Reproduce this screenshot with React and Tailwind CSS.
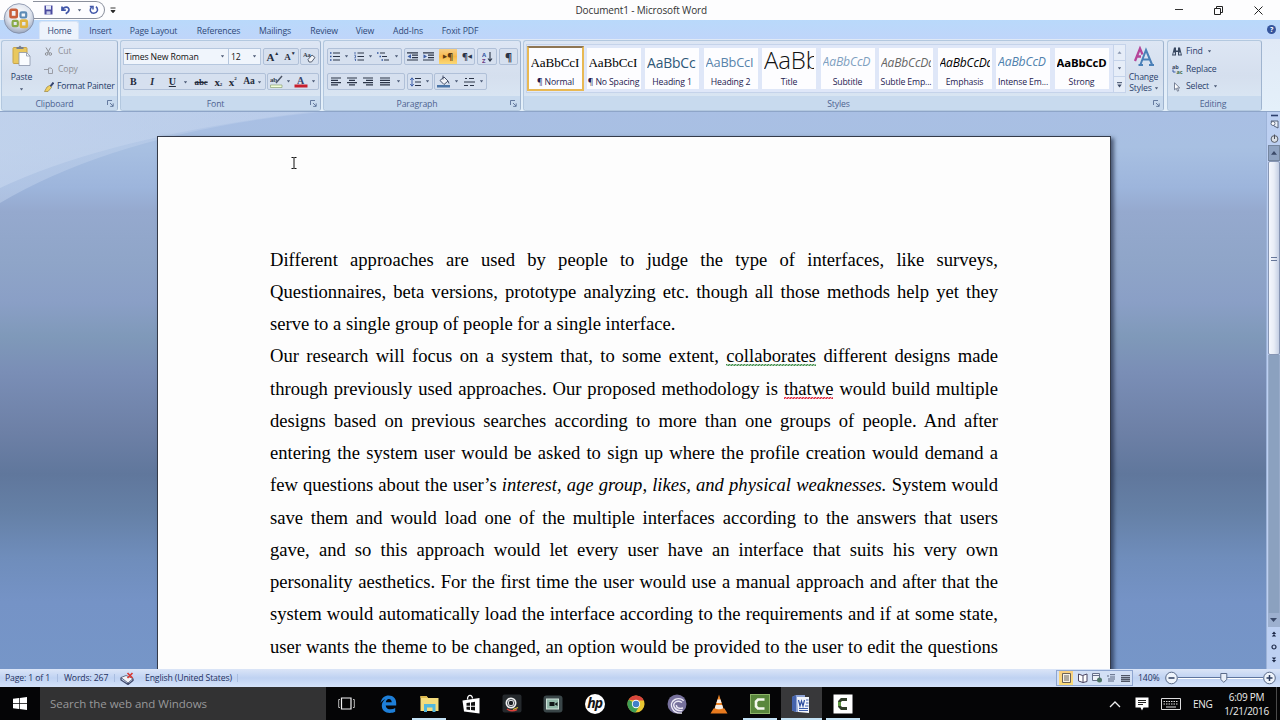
import React from "react";

const Svg = ({ w, h, vb, className = "", children }) => (
  <svg width={w} height={h} viewBox={vb || `0 0 ${w} ${h}`} className={`shrink-0 ${className}`} fill="none">
    {children}
  </svg>
);

const Caret = ({ className = "" }) => (
  <Svg w={5} h={3} className={className}>
    <path d="M0.8 0.3h3.400L2.5 2.400z" fill="#4c5a76" />
  </Svg>
);

const Launcher = () => (
  <Svg w={7} h={7}>
    <path d="M0.5 5V0.5H5M3 3l3 3M6.2 3.4v3h-3" stroke="#5a7196" strokeWidth="0.9" />
  </Svg>
);

function Group({ width, label, launcher, children, className = "" }) {
  return (
    <section className={`flex h-[71px] shrink-0 flex-col overflow-hidden rounded-[3px] border border-[#b3c8df] border-r-[#9fb4cf] bg-gradient-to-b from-[#dde6f4] via-[#d5dfee] to-[#dbe9f5] ${width} ${className}`}>
      <div className="h-[55px]">{children}</div>
      <div className="flex h-[14px] items-center bg-[#c8daee] pr-[3px] text-[#4d6290]">
        <span className="flex-1 pt-[2px] text-center">{label}</span>
        {launcher && <Launcher />}
      </div>
    </section>
  );
}

const Box = ({ width, className = "", children }) => (
  <div className={`flex h-[17px] items-center justify-around rounded-[2px] border border-[#b0c0d8] bg-[#d6e0ef] ${width} ${className}`}>{children}</div>
);

const TABS = [
  ["Insert", "w-[51px]"],
  ["Page Layout", "w-[55px]"],
  ["References", "w-[75px]"],
  ["Mailings", "w-[38px]"],
  ["Review", "w-[60px]"],
  ["View", "w-[22px]"],
  ["Add-Ins", "w-[64px]"],
  ["Foxit PDF", "w-[40px]"],
];

function TitleBar() {
  return (
    <header className="relative flex h-5 items-center bg-[#fdfdfe]">
      <div className="ml-[33px] flex h-[18px] w-[72px] items-center rounded-r-full border border-l-0 border-[#8a8f9c] bg-[#fdfdff] pl-[11px]">
        <Svg w={9} h={10}>
          <path d="M0.5 0.5h8v9h-8z" fill="#4a4aa0" />
          <path d="M2 0.5h5v4H2z" fill="#e6eaf8" />
          <path d="M2.5 6.3h4v3.2h-4z" fill="#c6cbe8" />
        </Svg>
        <Svg w={10} h={10} className="ml-2">
          <path d="M1 1.5v3.7h3.8M1.5 4.8C3 1.5 8 1.2 8 4.8c0 2-1.6 3-3.3 4" stroke="#4056a8" strokeWidth="1.7" />
        </Svg>
        <Caret className="ml-1.5" />
        <Svg w={10} h={10} className="ml-[7px]">
          <path d="M7 1.6c3 3 1 6.7-2.2 6.7C1.6 8.300 0 4.800 2.600 2.300M0.800 1.500H4v3" stroke="#4056a8" strokeWidth="1.5" />
        </Svg>
      </div>
      <Svg w={6} h={7} className="ml-[5px]">
        <path d="M0.500 1h5M1 3.500h4L3 5.800z" stroke="#222" strokeWidth="0.9" fill="#222" />
      </Svg>
      <h1 className="ml-[459.500px] text-[10px] tracking-[-0.140px] text-[#333] whitespace-nowrap">Document1 - Microsoft Word</h1>
      <div className="ml-auto flex items-center pr-[17px]">
        <Svg w={8} h={8}><path d="M0 3.500h8" stroke="#333" /></Svg>
        <Svg w={9} h={9} className="ml-[31px]">
          <path d="M0.500 2.500h6v6h-6zM2.500 2.500v-2h6v6h-2" stroke="#222" />
        </Svg>
        <Svg w={9} h={9} className="ml-[31px]"><path d="M0.500 0.500l8 8M8.500 0.500l-8 8" stroke="#222" /></Svg>
      </div>
      <div className="absolute left-[3px] top-[3px] z-10">
        <Svg w={32} h={32}>
          <defs>
            <radialGradient id="orb" cx="0.5" cy="0.35" r="0.65">
              <stop offset="0" stopColor="#ffffff" />
              <stop offset="0.6" stopColor="#dfe4ee" />
              <stop offset="1" stopColor="#9aa6bd" />
            </radialGradient>
          </defs>
          <circle cx="16" cy="15.500" r="14.800" fill="url(#orb)" stroke="#7f8aa3" strokeWidth="0.8" />
          <rect x="7.500" y="6.800" width="6.300" height="7.300" rx="1.200" stroke="#c9603c" strokeWidth="2.600" />
          <rect x="17.500" y="9.300" width="5.700" height="5.200" rx="1.200" stroke="#5d8bb5" strokeWidth="2.200" />
          <rect x="9.600" y="17.800" width="5.200" height="5.400" rx="1.200" stroke="#8aab4a" strokeWidth="2.200" />
          <rect x="17.800" y="17.600" width="6" height="6.300" rx="1.200" stroke="#e0b440" strokeWidth="2.600" />
        </Svg>
      </div>
    </header>
  );
}

function TabRow() {
  return (
    <nav className="flex h-[19px] items-end bg-gradient-to-b from-[#b9d9fb] to-[#bfd5fa] text-[#2f4878]">
      <div className="ml-[39px] flex h-[18px] w-[40px] items-center justify-center rounded-t-[3px] border border-b-0 border-[#d8e4f5] bg-[#edf3fc] pl-px pt-px">Home</div>
      <div className="flex h-[18px] items-center pt-[2px]">
        {TABS.map(([t, w], i) => (
          <span key={t} className={`flex justify-center whitespace-nowrap ${w} ${i === 0 ? "ml-[-4px]" : ""}`}>{t}</span>
        ))}
      </div>
      <div className="mb-[5px] ml-auto mr-[4px] flex size-[9px] items-center justify-center rounded-full bg-[#35549c] text-[7px] font-bold text-white">?</div>
    </nav>
  );
}

function Clipboard() {
  return (
    <Group width="w-[117px]" className="ml-[1px]" label="Clipboard" launcher>
      <div className="flex h-full">
        <div className="flex w-[39px] flex-col items-center pt-[4px] text-[#263c68]">
          <Svg w={19} h={21}>
            <rect x="1" y="2.500" width="14" height="16" rx="1" fill="#e9c85f" stroke="#c9a54a" />
            <path d="M4.500 4V2h2L8 0.500 9.500 2h2v2z" fill="#777f8e" />
            <path d="M7 7.500h7.500l3.500 3.500v9.500H7z" fill="#fafcff" stroke="#8a94a8" strokeWidth="0.8" />
            <path d="M14.500 7.500v3.500H18" stroke="#8a94a8" strokeWidth="0.8" />
          </Svg>
          <span className="mt-[7px]">Paste</span>
          <Caret className="mt-[6px]" />
        </div>
        <div className="flex flex-col pl-[3px] pt-[2px] text-[#8e9096]">
          <div className="flex h-[17.500px] items-center gap-[5px]">
            <Svg w={9} h={9}><path d="M2 0.500l3.500 6M6.500 0.500L3.500 6" stroke="#8e9096" /><circle cx="2.600" cy="7" r="1.300" stroke="#8e9096" /><circle cx="6.300" cy="7" r="1.300" stroke="#8e9096" /></Svg>
            Cut
          </div>
          <div className="flex h-[17.500px] items-center gap-[5px]">
            <Svg w={9} h={9}><path d="M0 4.500h4M4.500 3h2.500l1.500 1.500v4h-4z" stroke="#9a9da6" /></Svg>
            Copy
          </div>
          <div className="flex h-[17.500px] items-center gap-[3px] whitespace-nowrap tracking-[-0.220px] text-[#243a66]">
            <Svg w={10} h={10}><path d="M9.500 0.500L6 5" stroke="#35446e" strokeWidth="2" /><path d="M5.500 3.500l2 2L4 9.500H0.500L3 5z" fill="#f0d060" stroke="#9b8540" strokeWidth="0.700" /></Svg>
            Format Painter
          </div>
        </div>
      </div>
    </Group>
  );
}

const serif = "font-['Liberation_Serif',serif] font-bold text-[#252c3c]";

function FontGroup() {
  return (
    <Group width="w-[201px]" className="ml-[2px]" label="Font" launcher>
      <div className="flex items-center pl-[2px] pt-[7px]">
        <div className="flex h-[17px] w-[106px] items-center justify-between border border-[#b6c7de] bg-[#f0f5fc] pl-px pr-[3px] tracking-[-0.120px] text-[#111]"><span className="pt-px">Times New Roman</span><Caret /></div>
        <div className="flex h-[17px] w-[32px] items-center justify-between border border-l-0 border-[#b6c7de] bg-[#f0f5fc] pl-[2px] pr-[3px] text-[#111]"><span className="pt-px">12</span><Caret /></div>
        <Box width="w-[36px]" className={`ml-[2px] ${serif}`}>
          <span className="flex text-[11px] leading-3">A<span className="text-[5px] leading-[5px]">▲</span></span>
          <span className="flex text-[9px] leading-3">A<span className="text-[5px] leading-[5px]">▼</span></span>
        </Box>
        <Box width="w-[19px]" className="ml-[1px]">
          <Svg w={13} h={12}><path d="M5 8.500l4-4.500 3 2.500-3.500 4.500H6z" fill="#f2f4f8" stroke="#4b5365" strokeWidth="0.900" /><text x="0" y="5.500" fontSize="6.500" fontWeight="700" fill="#353c4c" fontFamily="Liberation Serif, serif">Aa</text></Svg>
        </Box>
      </div>
      <div className="flex items-center pl-[2px] pt-[8px]">
        <Box width="w-[143px]" className={`pt-px text-[10px] ${serif}`}>
          <span className="w-[12px] text-center">B</span>
          <span className="w-[12px] text-center italic">I</span>
          <span className="flex items-center gap-[7px] pl-1"><span className="underline">U</span><Caret /></span>
          <span className="text-[9px] line-through">abc</span>
          <span className="flex items-end text-[11px] leading-3">x<span className="text-[5px] leading-[6px]">2</span></span>
          <span className="flex items-start text-[11px] leading-3">x<span className="text-[5px] leading-[6px]">2</span></span>
          <span className="flex items-center gap-[2px] text-[9.500px]">Aa<Caret /></span>
        </Box>
        <Box width="w-[52px]" className="ml-[1px]">
          <Svg w={13} h={13}><text x="0" y="7" fontSize="7" fontWeight="700" fill="#353c4c" fontFamily="Liberation Serif, serif">ab</text><path d="M12 1L6 8" stroke="#4a5263" strokeWidth="1.400" /><path d="M0.500 10h11.500v2.500H0.500z" fill="#f2ffd8" stroke="#8da276" strokeWidth="0.700" /></Svg>
          <Caret />
          <Svg w={14} h={13}><text x="3" y="8.500" fontSize="10" fontWeight="700" fill="#36466e" fontFamily="Liberation Serif, serif">A</text><path d="M0.500 9.500h13v3H0.500z" fill="#c9202e" /></Svg>
          <Caret />
        </Box>
      </div>
    </Group>
  );
}

const K = "#2b3447";
const lines = (arr) => arr.map(([x1, x2, y], i) => <path key={i} d={`M${x1} ${y}H${x2}`} stroke={K} strokeWidth="1.2" />);

function ParagraphGroup() {
  const align = [
    [[0, 10, 1], [0, 7, 3.3], [0, 10, 5.6], [0, 7, 7.9]],
    [[0, 10, 1], [2, 8, 3.3], [0, 10, 5.6], [2, 8, 7.9]],
    [[0, 10, 1], [3, 10, 3.3], [0, 10, 5.6], [3, 10, 7.9]],
    [[0, 10, 1], [0, 10, 3.3], [0, 10, 5.6], [0, 10, 7.9]],
  ];
  return (
    <Group width="w-[198px]" className="ml-[2px]" label="Paragraph" launcher>
      <div className="flex items-center pl-[3px] pt-[7px]">
        <Box width="w-[75px]">
          <Svg w={10} h={9}>{lines([[3, 10, 1], [3, 10, 4.5], [3, 10, 8]])}<path d="M0 1h1.500M0 4.500h1.500M0 8h1.500" stroke="#3355a0" strokeWidth="1.500" /></Svg><Caret />
          <Svg w={10} h={9}>{lines([[3.5, 10, 1], [3.5, 10, 4.5], [3.5, 10, 8]])}<path d="M1 0v2.500M0.500 3.500h1v2h-1M0.500 7h1v2" stroke="#3355a0" strokeWidth="0.800" /></Svg><Caret />
          <Svg w={12} h={9}>{lines([[3, 8, 1], [5, 10, 4.5], [7, 12, 8]])}<path d="M0 1h1.500M2.500 4.500H4M4.500 8H6" stroke="#3355a0" strokeWidth="1.500" /></Svg><Caret />
        </Box>
        <Box width="w-[71px]" className="ml-[2px]">
          <Svg w={11} h={9}>{lines([[0, 11, 0.8], [5, 11, 3.2], [5, 11, 5.600], [0, 11, 8]])}<path d="M4 2.200v4.400L0.500 4.400z" fill="#3e5fa8" /></Svg>
          <Svg w={11} h={9}>{lines([[0, 11, 0.8], [5, 11, 3.2], [5, 11, 5.600], [0, 11, 8]])}<path d="M0.500 2.200v4.400L4 4.400z" fill="#3e5fa8" /></Svg>
          <div className="flex h-[15px] w-[18px] items-center justify-center bg-gradient-to-b from-[#f6cf86] via-[#f7b94a] to-[#fbd975] text-[9px] font-bold text-[#5b3a14]"><span className="text-[5px]">▶</span>¶</div>
          <div className="flex items-center text-[9px] font-bold text-[#2b3447]">¶<span className="text-[5px]">◀</span></div>
        </Box>
        <Box width="w-[20px]" className="ml-[2px]">
          <Svg w={11} h={12}><text x="0" y="5.500" fontSize="6" fontWeight="700" fill="#3355a0" fontFamily="Open Sans, sans-serif">A</text><text x="0" y="11.500" fontSize="6" fontWeight="700" fill="#6a3a80" fontFamily="Open Sans, sans-serif">Z</text><path d="M8 1v8.500M6 7.500L8 10l2-2.500" stroke={K} strokeWidth="1.100" /></Svg>
        </Box>
        <Box width="w-[19px]" className="ml-[2px] text-[11px] font-bold text-[#2b3447]">¶</Box>
      </div>
      <div className="flex items-center pl-[3px] pt-[8px]">
        <Box width="w-[78px]">
          {align.map((a, i) => <Svg key={i} w={10} h={9}>{lines(a)}</Svg>)}
          <Caret />
        </Box>
        <Box width="w-[26px]" className="ml-[2px]">
          <Svg w={11} h={10}>{lines([[5, 11, 1.500], [5, 11, 5], [5, 11, 8.500]])}<path d="M2 1v8M0.300 3L2 0.800 3.700 3M0.300 7L2 9.200 3.700 7" stroke="#3e5fa8" /></Svg><Caret />
        </Box>
        <Box width="w-[53px]" className="ml-[1px]">
          <Svg w={13} h={13}><path d="M3 5.500L7 2l4 4-4 3.500z" fill="#f0f3f9" stroke="#46516a" /><path d="M6 0.500v4M11 6l1 2.500" stroke="#46516a" /><path d="M0 10h13v2.500H0z" fill="#4c76a8" /></Svg><Caret />
          <Svg w={11} h={10}>{lines([[5, 10, 1.500], [0, 11, 5], [0, 4, 8.500], [6, 10, 8.500]])}<path d="M1 1.500h2" stroke={K} /></Svg><Caret />
        </Box>
      </div>
    </Group>
  );
}

const STYLES = [
  ["AaBbCcI", "¶ Normal", "font-['Liberation_Serif',serif] text-[13.200px] text-black"],
  ["AaBbCcI", "¶ No Spacing", "font-['Liberation_Serif',serif] text-[13.200px] text-black"],
  ["AaBbCc", "Heading 1", "text-[13.900px] text-[#2f5878]"],
  ["AaBbCcI", "Heading 2", "text-[12.800px] text-[#5783ab]"],
  ["AaBb", "Title", "text-[24px] font-light text-[#111] pb-[5px]"],
  ["AaBbCcD", "Subtitle", "text-[12.200px] italic text-[#7fa0bf]"],
  ["AaBbCcDd", "Subtle Emp...", "text-[12px] italic text-[#666]"],
  ["AaBbCcDd", "Emphasis", "text-[12px] italic text-black"],
  ["AaBbCcD", "Intense Em...", "text-[12.200px] italic text-[#4f81ad]"],
  ["AaBbCcD", "Strong", "text-[11.400px] font-bold text-black"],
];

function StylesGroup() {
  return (
    <Group width="w-[641px]" className="ml-[2px]" label="Styles" launcher>
      <div className="flex pl-[2px] pt-[3px]">
        <div className="flex h-[49px] w-[588px] items-center gap-[4.500px] border border-[#c5d3ea] bg-[#dfe7f8] pl-px">
          {STYLES.map(([a, b, c], i) => (
            <div key={b} className={`flex shrink-0 flex-col items-center overflow-hidden bg-[#fdfdff] ${i === 0 ? "-ml-px -mr-[2px] h-[45px] w-[57px] border-2 border-[#e8b954] border-t-[#8f7654]" : "h-[41px] w-[54px]"}`}>
              <div className={`flex h-[29px] w-[50px] shrink-0 items-center overflow-hidden whitespace-nowrap tracking-[-0.150px] ${c}`}>{a}</div>
              <div className="mt-px whitespace-nowrap text-[#241a50]">{b}</div>
            </div>
          ))}
        </div>
        <div className="flex h-[49px] w-[12px] flex-col border border-l-0 border-[#c5d3ea] bg-[#e6edf8]">
          <div className="flex flex-1 items-center justify-center border-b border-[#c5d3ea]"><Svg w={5} h={3}><path d="M0.500 2.700h4L2.500 0.300z" fill="#8693ad" /></Svg></div>
          <div className="flex flex-1 items-center justify-center border-b border-[#c5d3ea]"><Caret /></div>
          <div className="flex flex-1 items-center justify-center"><Svg w={5} h={6}><path d="M0 0.700h5" stroke="#3c4a66" /><path d="M0.300 2.500h4.400L2.500 5.500z" fill="#3c4a66" /></Svg></div>
        </div>
        <div className="flex w-[34px] flex-col items-center pl-[1px] pt-px text-[#2c416c]">
          <Svg w={21} h={23}>
            <path d="M2 16L7 3.500l2.500 6M4 11.500h4" stroke="#b5469a" strokeWidth="2.300" />
            <path d="M7.500 19.500L13 5l6 14.500M9.500 14.500h7M5.500 20h4.500M16 20h5" stroke="#4a80b8" strokeWidth="2" />
          </Svg>
          <span className="mt-[3px] leading-3">Change</span>
          <span className="flex items-center gap-[2px] pl-px leading-[11px]">Styles<Caret /></span>
        </div>
      </div>
    </Group>
  );
}

function EditingGroup() {
  return (
    <Group width="w-[95px]" className="ml-[3px]" label="Editing">
      <div className="flex flex-col pl-[4px] pt-[2px] text-[#2c416c]">
        <div className="flex h-[17.500px] items-center gap-[4px]">
          <Svg w={10} h={9}><path d="M2 0.500h2v3h2v-3h2L10 8.500H6V5H4v3.500H0z" fill="#38475f" /><path d="M1.500 5.500h1.500v2H1.200zM7 5.500h1.500l.3 2H7z" fill="#c9d4e6" /></Svg>
          <span>Find</span><Caret />
        </div>
        <div className="flex h-[17.500px] items-center gap-[4px]">
          <Svg w={11} h={10}><text x="0" y="4.500" fontSize="5.500" fontWeight="700" fill="#38475f" fontFamily="Open Sans, sans-serif">ab</text><text x="4.500" y="9.500" fontSize="5.500" fontWeight="700" fill="#3d6a48" fontFamily="Open Sans, sans-serif">ac</text><path d="M1 5.500v2.500h2.500" stroke="#3e5fa8" /></Svg>
          <span className="-ml-px">Replace</span>
        </div>
        <div className="flex h-[17.500px] items-center gap-[4px]">
          <Svg w={10} h={10}><path d="M2.500 0.800v7l1.800-1.500 1.200 2.900 1.200-.5-1.200-2.800h2.200z" fill="#fff" stroke="#59647c" strokeWidth="0.800" /></Svg>
          <span>Select</span><Caret />
        </div>
      </div>
    </Group>
  );
}

const W = ({ children, tone }) => (
  <span className={`bg-[length:3px_2px] bg-bottom bg-repeat-x ${tone}`}>{children}</span>
);
const GRAMMAR = "bg-[repeating-conic-gradient(#3f8f4a_0_25%,transparent_0_50%)]";
const SPELLING = "bg-[repeating-conic-gradient(#e0243c_0_25%,transparent_0_50%)]";

const BODY = [
  "Different approaches are used by people to judge the type of interfaces, like surveys,",
  "Questionnaires, beta versions, prototype analyzing etc. though all those methods help yet they",
  "serve to a single group of people for a single interface.",
  <>Our research will focus on a system that, to some extent, <W tone={GRAMMAR}>collaborates</W> different designs made</>,
  <>through previously used approaches. Our proposed methodology is <W tone={SPELLING}>thatwe</W> would build multiple</>,
  "designs based on previous searches according to more than one groups of people. And after",
  "entering the system user would be asked to sign up where the profile creation would demand a",
  <>few questions about the user’s <i>interest, age group, likes, and physical weaknesses.</i> System would</>,
  "save them and would load one of the multiple interfaces according to the answers that users",
  "gave, and so this approach would let every user have an interface that suits his very own",
  "personality aesthetics. For the first time the user would use a manual approach and after that the",
  "system would automatically load the interface according to the requirements and if at some state,",
  "user wants the theme to be changed, an option would be provided to the user to edit the questions",
];

function Workspace() {
  return (
    <main className="relative flex h-[557px] overflow-hidden bg-[linear-gradient(180deg,#a9bfe4_0px,#a8c0e2_35px,#9db5dc_75px,#95a9ce_100px,#8fa5c8_150px,#8a9fc6_190px,#7f99b9_225px,#7a8eb6_260px,#6d80a6_320px,#60779c_362px,#6580a6_400px,#6f8dbb_445px,#7593c6_490px,#7696c8_557px)]">
      <svg width="320" height="100" viewBox="0 0 320 100" className="absolute left-0 top-0">
        <defs>
          <linearGradient id="glow" x1="0" y1="0" x2="1" y2="0">
            <stop offset="0" stopColor="#c6d6ee" stopOpacity="0.9" />
            <stop offset="1" stopColor="#c0d1ec" stopOpacity="0.8" />
          </linearGradient>
        </defs>
        <path d="M0 0H320Q120 20 0 91Z" fill="url(#glow)" opacity="0.5" />
        <path d="M0 0H310Q110 24 0 76Z" fill="url(#glow)" opacity="0.7" />
      </svg>
      <article className="relative ml-[157px] mt-[24px] h-[560px] w-[954px] shrink-0 border border-[#343a48] bg-[#fdfdfd] pl-[112px] pt-[106.500px] shadow-[3px_2px_4px_rgba(25,35,60,0.65)]">
        <div className="w-[728px] font-['Liberation_Serif',serif] text-[18.600px] leading-[32.250px] tracking-normal text-black">
          {BODY.map((l, i) => (
            <p key={i} className={`h-[32.250px] ${i === 2 ? "whitespace-nowrap" : "[text-align-last:justify]"}`}>{l}</p>
          ))}
        </div>
        <svg width="6" height="12" viewBox="0 0 6 12" className="absolute left-[133px] top-[20px]" fill="none">
          <path d="M0.500 0.500H2.500L3 1l.5-.5h2M3 1v10M0.500 11.500H2.500L3 11l.5.5h2" stroke="#111" />
        </svg>
      </article>
      <aside className="ml-auto flex w-[14px] flex-col items-center border-l border-[#9db3d8] bg-[#bdd0f2]">
        <Svg w={12} h={33}>
          <path d="M3 3.500h7" stroke="#2c3f6c" strokeWidth="1.600" />
          <path d="M3 9l3 5 4 2V9z" fill="#e8eef8" stroke="#4a5770" strokeWidth="0.900" /><circle cx="5" cy="11.500" r="2" fill="#fff" stroke="#4a5770" strokeWidth="0.800" />
          <circle cx="6.500" cy="27" r="3.400" fill="#dadfe6" stroke="#4a4f5b" strokeWidth="0.900" /><path d="M6.500 22.500v4.500" stroke="#4a4f5b" />
        </Svg>
        <div className="flex h-[16px] w-[12px] items-center justify-center border border-[#75869f] bg-[#8fa3c2]"><Svg w={6} h={4}><path d="M0 3.700h6L3 0z" fill="#3b4a69" /></Svg></div>
        <div className="flex h-[194px] w-[12px] flex-col items-center justify-center gap-px rounded-[2px] border border-[#8796b4] bg-gradient-to-r from-[#f4f7fd] via-[#e8edf6] to-[#c4cfe4] pt-px">
          <div className="mb-px h-px w-[6px] bg-[#66779a]" /><div className="h-px w-[6px] bg-[#66779a]" />
        </div>
        <div className="w-[12px] flex-1 border-x border-[#98abc9] bg-[#8ba1bf]" />
        <div className="flex h-[14px] w-[12px] items-center justify-center bg-[#9db0cf]"><Svg w={7} h={4}><path d="M0 0h7L3.500 4z" fill="#3b4a69" /></Svg></div>
        <div className="flex h-[42px] flex-col items-center justify-around pb-[2px]">
          <Svg w={6} h={6}><path d="M0.800 3L3 0.500 5.200 3zM0.800 5.500L3 3l2.200 2.500z" fill="#1f2b4a" /></Svg>
          <Svg w={6} h={6}><circle cx="3" cy="3" r="2" stroke="#1f2b4a" strokeWidth="1.200" /></Svg>
          <Svg w={6} h={6}><path d="M0.800 0.500h4.400L3 3zM0.800 3h4.400L3 5.500z" fill="#1f2b4a" /></Svg>
        </div>
      </aside>
    </main>
  );
}

function StatusBar() {
  return (
    <footer className="flex h-[18px] items-center bg-gradient-to-b from-[#dbe5f7] via-[#bfd2f2] to-[#d5e3fa] text-[#1f3160] whitespace-nowrap">
      <span className="w-[58px] border-r border-[#a9bde0] pl-[5px]">Page: 1 of 1</span>
      <span className="w-[57px] border-r border-[#a9bde0] pl-[6px]">Words: 267</span>
      <Svg w={15} h={13} className="ml-[5px]">
        <path d="M1 5.500l5-2 7 3-5 4.500z" fill="#f2f4f8" stroke="#69718a" /><path d="M1 5.500v2.500L8 12.500v-1.500M13 6.500v2L8 12.500" stroke="#3f486a" strokeWidth="1.300" /><path d="M7.500 1l5 5M12.500 1l-5 5" stroke="#d93a35" strokeWidth="1.700" />
      </Svg>
      <span className="ml-[10px] w-[93px] border-r border-[#a9bde0]">English (United States)</span>
      <div className="ml-auto flex h-[16px] w-[77px] items-center justify-around border border-[#8fa6d0] bg-[#d3e0f5]">
        <span className="flex h-[14px] w-[14px] items-center justify-center bg-gradient-to-b from-[#f8cf80] to-[#fbdc78]"><Svg w={9} h={10}><path d="M0.500 0.500h8v9h-8zM2 3h5M2 5h5M2 7h5" fill="#f6f2e6" stroke="#6b6257" /></Svg></span>
        <Svg w={10} h={10}><path d="M0.500 1l4 1.500 4.500-1.500v7.500L5 9.500 0.500 8zM5 2.500v7" fill="#fff" stroke="#4b4560" /></Svg>
        <Svg w={11} h={10}><path d="M0.500 0.500h7v7h-7zM0.500 2.500h7" fill="#eef2f8" stroke="#67708a" /><circle cx="7.500" cy="7" r="2.500" fill="#4d7565" /></Svg>
        <Svg w={9} h={8}><path d="M0 2h2M3 0.700h5M3 3h5M1 5h7M1 7h6" stroke="#59657f" /></Svg>
        <Svg w={9} h={7}><path d="M0 0.700h9M0 2.600h9M0 4.500h9M0 6.400h9" stroke="#4f5665" strokeWidth="1.300" /></Svg>
      </div>
      <span className="ml-[5px] w-[22px]">140%</span>
      <Svg w={13} h={14} className="ml-[5px]"><circle cx="6.500" cy="7" r="5.800" fill="#eff4fb" stroke="#5a6a88" /><path d="M3.500 7h6" stroke="#2d3c5e" strokeWidth="1.500" /></Svg>
      <div className="relative h-[10px] w-[85px]">
        <div className="mt-[4px] h-[2px] border-t border-[#5f759e] bg-white" />
        <Svg w={8} h={10} className="absolute left-[42px] top-0"><path d="M0.800 0.500h6v6L3.800 9.300 0.800 6.500z" fill="#e8eef8" stroke="#5a6a88" /></Svg>
      </div>
      <Svg w={13} h={14} className="mr-[4px]"><circle cx="6.500" cy="7" r="5.800" fill="#eff4fb" stroke="#5a6a88" /><path d="M3.500 7h6M6.500 4v6" stroke="#2d3c5e" strokeWidth="1.500" /></Svg>
    </footer>
  );
}

const APPS = [
  ["task", <Svg w={17} h={13}><path d="M3.500 1h9.500v11H3.500z" stroke="#f2f2f2" strokeWidth="1.200" /><path d="M2 2.500H0.700v8H2M15 2.500h1.300v8H15" stroke="#bbb" /></Svg>],
  ["edge", <Svg w={17} h={18}><path d="M0.500 8C1.500 2.800 4.800 0.500 8.700 0.500c4.800 0 7.500 3.300 7.500 7.600V10.400H5.700c.2 2.700 2.400 3.900 5 3.900 1.700 0 3.100-.4 4.500-1.200v3.600C13.700 17.500 12 17.900 9.800 17.900 5 17.900 1.800 15 1.800 10.700c0-2.600 1.300-5 3.700-6.400C3.300 4.900 1.500 6.200 0.500 8zM5.800 7.300h5.900c0-2-.9-3.300-2.800-3.300-1.700 0-2.800 1.400-3.100 3.300z" fill="#1e7fd8" /></Svg>],
  ["files", <Svg w={19} h={17}><path d="M0.500 1h6l1.500 2h10.500v13H0.500z" fill="#f4dc7c" /><path d="M0.500 1h6l1.500 2H0.500z" fill="#dcb84e" /><path d="M4 9h11.500v8h-3v-4.500h-5.500V17H4z" fill="#52b7dd" /></Svg>, "w-[34px]"],
  ["store", <Svg w={18} h={20}><path d="M5.500 5.500C5.500 0.500 10 0 10.500 4.500" stroke="#fff" strokeWidth="1.300" /><path d="M0.500 6.500L17.500 4v15.500L2 17.500z" fill="#fff" /><path d="M4.500 9l3.500-.5v3.300H4.500zM9 8.400l4-.6v4H9zM4.500 12.800H8v3.200l-3.500-.4zM9 12.800h4v3.800l-4-.5z" fill="#111" /></Svg>],
  ["cam", <Svg w={20} h={19}><rect width="19" height="18" x="0.500" y="0.500" rx="2" fill="#25292c" /><circle cx="9" cy="9" r="5.500" fill="#f1f1f1" /><circle cx="9" cy="9" r="3.600" stroke="#555b60" /><circle cx="9" cy="9" r="2.200" fill="#1b1f24" /><path d="M5 15c2.500 2 6 2.500 10 .5" stroke="#e0413a" strokeWidth="1.500" /><path d="M11 15.500l5-2" stroke="#d8c23a" strokeWidth="1.300" /></Svg>],
  ["video", <Svg w={20} h={18}><rect x="0.500" y="0.500" width="19" height="17" rx="3" fill="#3a4648" /><rect x="3.500" y="4" width="12" height="10" fill="#91b7a8" stroke="#d0e2d9" /><path d="M6.500 7h5v4h-5zM12 8.700L14.500 7v4L12 9.500z" fill="#101517" /></Svg>],
  ["hp", <div className="flex size-5 items-center justify-center rounded-full bg-white pb-[2px] text-[14px] font-bold italic leading-none tracking-[-1px] text-[#151515]">hp</div>],
  ["chrome", <Svg w={18} h={18} vb="0 0 20 20"><circle cx="10" cy="10" r="9.500" fill="#e8c631" /><path d="M10 10L1.800 5.200A9.500 9.500 0 0 0 9.500 19.500l4-7z" fill="#3f9e56" /><path d="M1.800 5.200A9.500 9.500 0 0 1 18.600 6H10z" fill="#d9463c" /><circle cx="10" cy="10" r="4.600" fill="#fff" /><circle cx="10" cy="10" r="3.600" fill="#4380c8" /></Svg>],
  ["bt", <Svg w={20} h={20}><circle cx="10" cy="10" r="9.500" fill="#77719c" /><path d="M15 19C5 20 1 9 8 5.500c4-2 8 0 8.500 1.500M15.500 16.500C8 17.500 4.500 11 8.500 8c2.500-1.500 5-.5 6.500.5M16 14c-4 1-7-.5-6.500-3" stroke="#ece9f5" strokeWidth="1.400" /></Svg>],
  ["vlc", <Svg w={18} h={20}><path d="M3.500 14.500h11l3 5H0.500z" fill="#e77a1e" /><path d="M9 0.500L4.500 15c2.500 1.500 6.500 1.500 9 0z" fill="#ef8424" /><path d="M7.500 5.500h3L11.600 9H6.400zM5.800 11h6.400l1.100 3.300c-2.800 1.300-6 1.300-8.600 0z" fill="#f5ede6" /></Svg>],
  ["cam1", <Svg w={20} h={20}><rect x="0.500" y="0.500" width="19" height="19" fill="#59873c" stroke="#8cb368" /><path d="M14.500 5.500H8L6 7.500v5l2 2h6.500" stroke="#f4f8ee" strokeWidth="2.600" /></Svg>, "w-[34px]"],
  ["word", <Svg w={20} h={20}><path d="M1 3l4-2h9v17H5l-4-1.500z" fill="#8ea3d4" /><path d="M1 3l4-2v17l-4-1.500z" fill="#4563ac" /><path d="M6 3h12v16l-11-1z" fill="#f3f6fc" /><path d="M7.500 6l1.500 6L10.500 7l1.500 5L13.500 6" stroke="#2c4da0" strokeWidth="1.200" /><path d="M8 14.500h9M8 16.500h9M15 6h2.500M15 9h2.500M14 12h3.500" stroke="#3c5dac" /></Svg>, "w-[41px]"],
  ["cam2", <Svg w={20} h={20}><rect x="0.500" y="0.500" width="19" height="19" fill="#fff" /><path d="M14 5.500H8.500L6.500 7.500v5l2 2H14" stroke="#2f3d29" strokeWidth="2.800" /><path d="M6.500 12V8" stroke="#5d9a3e" strokeWidth="2.800" /></Svg>, "w-[34px]"],
];

function Taskbar() {
  return (
    <footer className="flex h-[33px] bg-[#050506] text-[#ededed]">
      <div className="flex w-[40px] items-center justify-center">
        <Svg w={14} h={13}><path d="M0 1.800l6-.8v5.200H0zM6.700 0.900L14 0v6.200H6.700zM0 6.900h6V12l-6-.8zM6.700 6.900H14V13l-7.300-.9z" fill="#fff" /></Svg>
      </div>
      <div className="flex w-[286px] items-center bg-[#323233] pl-[10px] pt-px text-[11.500px] tracking-[-0.030px] text-[#98989a]">Search the web and Windows</div>
      <div className="flex">
        {APPS.map(([k, icon, bar]) => (
          <div key={k} className={`relative flex w-[41.350px] items-center justify-center ${k === "word" ? "bg-[#38383a]" : ""}`}>
            {icon}
            {bar && <div className={`absolute bottom-0 h-[2px] bg-[#c3e2f5] ${bar}`} />}
          </div>
        ))}
      </div>
      <div className="ml-auto flex items-center">
        <Svg w={12} h={8}><path d="M1 7l5-5 5 5" stroke="#eee" strokeWidth="1.300" /></Svg>
        <Svg w={14} h={14} className="ml-[14px]"><path d="M0.500 0.500h13v10H8.500L7 13.500 5.500 10.500h-5z" fill="#fff" /><path d="M3 3.500h8M3 5.500h8M3 7.500h5" stroke="#222" /></Svg>
        <Svg w={20} h={12} className="ml-[12px]"><path d="M0.500 0.500h19v11h-19z" stroke="#ddd" /><path d="M2.500 3.500h15M2.500 6h15" stroke="#ddd" strokeWidth="1.200" strokeDasharray="1.500 1" /><path d="M5 9h10" stroke="#ddd" /></Svg>
        <span className="ml-[12px] w-[19px] pt-px text-[10px] tracking-[-0.300px]">ENG</span>
        <div className="ml-[11px] w-[47px] text-center text-[10px] leading-[14px] tracking-[-0.300px] whitespace-nowrap">6:09 PM<br />1/21/2016</div>
        <div className="ml-[6px] h-[33px] w-[4px] border-l border-[#4a4a4a]" />
      </div>
    </footer>
  );
}

export default function App() {
  return (
    <div className="flex h-[720px] w-[1280px] flex-col overflow-hidden font-['Open_Sans','Noto_Sans',sans-serif] text-[8.700px] leading-none tracking-[-0.150px]">
      <TitleBar />
      <TabRow />
      <div className="flex h-[73px] items-start border-b border-[#8ea5c8] bg-gradient-to-b from-[#e0e9f6] to-[#e4f0fa] pt-px">
        <Clipboard />
        <FontGroup />
        <ParagraphGroup />
        <StylesGroup />
        <EditingGroup />
      </div>
      <Workspace />
      <StatusBar />
      <Taskbar />
    </div>
  );
}
